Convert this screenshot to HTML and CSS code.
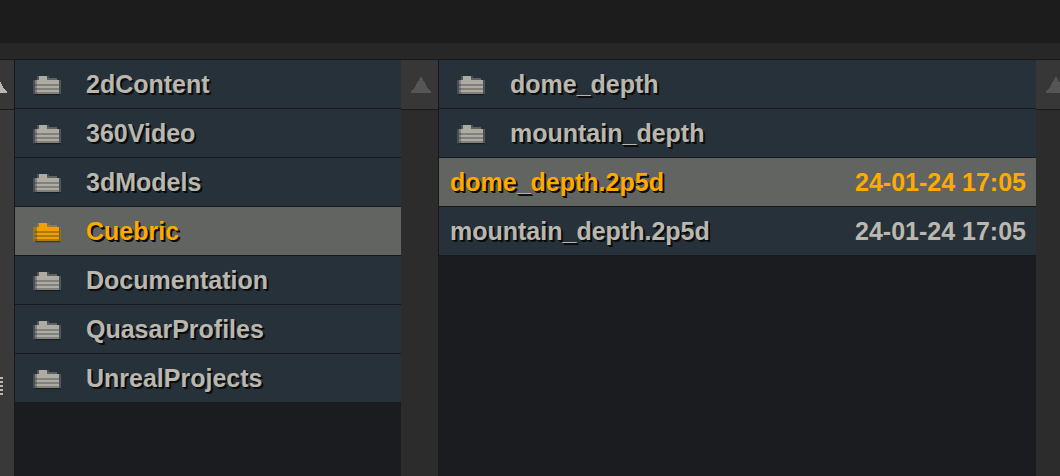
FILE: index.html
```
<!DOCTYPE html>
<html lang="en">
<head>
<meta charset="utf-8">
<title>File browser</title>
<link rel="stylesheet" href="styles.css">
</head>
<body>
<svg class="defs" width="0" height="0">
  <symbol id="folder" viewBox="0 0 30 24" shape-rendering="crispEdges">
    <path d="M2 8H28V24H2Z" fill="#0b0f12" opacity=".15"/>
    <path d="M3 8H27V23H3Z" fill="#0b0f12" opacity=".4"/>
    <path d="M0 8H2V22H0Z" fill="currentColor" opacity=".25"/>
    <path d="M26 8H28V22H26Z" fill="currentColor" opacity=".35"/>
    <path d="M4 4H6V8H4Z" fill="currentColor" opacity=".3"/>
    <path d="M6 4H14V8H6Z" fill="currentColor"/>
    <path d="M14 4H16V6H14Z" fill="currentColor" opacity=".25"/>
    <path d="M14 6H24V8H14Z" fill="currentColor" opacity=".4"/>
    <path d="M2 8H26V22H2Z" fill="currentColor"/>
    <path d="M2 12H26V14H2ZM2 16H26V18H2ZM2 20H26V22H2Z" fill="#20242a" opacity=".32"/>
    <path d="M2 8H4V22H2Z" fill="#20242a" opacity=".3"/>
  </symbol>
  <symbol id="up" viewBox="0 0 20 16" shape-rendering="crispEdges">
    <path d="M9 0H11V2H12V4H13V5H14V7H15V9H16V11H17V12H18V13H19V14H20V16H0V14H1V13H2V12H3V11H4V9H5V7H6V5H7V4H8V2H9Z" fill="currentColor"/>
  </symbol>
</svg>
<div class="topbar"></div>
<div class="toolbar"></div>
<main class="browser">
  <div class="scroll scroll-left">
    <div class="scroll-button bright"><svg class="arrow"><use href="#up"/></svg></div>
    <div class="track"><div class="grip"></div></div>
  </div>
  <section class="list folders">
    <div class="row"><svg class="icon"><use href="#folder"/></svg><span class="name">2dContent</span></div>
    <div class="row"><svg class="icon"><use href="#folder"/></svg><span class="name">360Video</span></div>
    <div class="row"><svg class="icon"><use href="#folder"/></svg><span class="name">3dModels</span></div>
    <div class="row selected"><svg class="icon"><use href="#folder"/></svg><span class="name">Cuebric</span></div>
    <div class="row"><svg class="icon"><use href="#folder"/></svg><span class="name">Documentation</span></div>
    <div class="row"><svg class="icon"><use href="#folder"/></svg><span class="name">QuasarProfiles</span></div>
    <div class="row"><svg class="icon"><use href="#folder"/></svg><span class="name">UnrealProjects</span></div>
  </section>
  <div class="scroll scroll-middle">
    <div class="scroll-button"><svg class="arrow"><use href="#up"/></svg></div>
    <div class="track"></div>
  </div>
  <section class="list files">
    <div class="row"><svg class="icon"><use href="#folder"/></svg><span class="name">dome_depth</span></div>
    <div class="row"><svg class="icon"><use href="#folder"/></svg><span class="name">mountain_depth</span></div>
    <div class="row file selected"><span class="name">dome_depth.2p5d</span><span class="date">24-01-24 17:05</span></div>
    <div class="row file"><span class="name">mountain_depth.2p5d</span><span class="date">24-01-24 17:05</span></div>
  </section>
  <div class="scroll scroll-right">
    <div class="scroll-button"><svg class="arrow"><use href="#up"/></svg></div>
    <div class="track"></div>
  </div>
</main>
</body>
</html>
```
FILE: styles.css
```
* { box-sizing: border-box; }
body {
  margin: 0;
  height: 476px;
  display: flex;
  flex-direction: column;
  overflow: hidden;
  background: #1b1c20;
  color: #bab8ae;
  font: bold 25px/48px "Liberation Sans", Arial, sans-serif;
}
.defs { display: none; }
.topbar { height: 43px; background: #1c1c1c; }
.toolbar { height: 17px; background: #272727; border-bottom: 1px solid #191919; }
.browser { flex: 1; display: flex; }
.list { background: #1b1c20; }
.folders { width: 386px; }
.files { width: 597px; }
.row {
  height: 49px;
  display: flex;
  align-items: center;
  padding-left: 18px;
  padding-right: 10px;
  background: #27313a;
  border-bottom: 1px solid #17191d;
  white-space: nowrap;
}
.row.selected { background: #626462; color: #ffaa00; }
.row.file { padding-left: 11px; justify-content: space-between; }
.icon { width: 30px; height: 24px; margin-right: 23px; color: #aeaca2; flex: none; }
.selected .icon { color: #f0a000; }
.name { height: 48px; text-shadow: 1px 1px 0 #0b0c0d, 2px 2px 0 #0b0c0d; }
.date { height: 48px; }
.scroll { display: flex; flex-direction: column; overflow: hidden; }
.scroll-left { width: 15px; border-right: 1px solid #17181a; }
.scroll-middle { width: 38px; border-right: 1px solid #17181a; }
.scroll-right { width: 24px; }
.scroll-button {
  height: 50px;
  padding: 17px 0 0 10px;
  background: #373737;
  border-bottom: 1px solid #191919;
  color: #555;
}
.scroll-button.bright { padding-left: 0; color: #bab8ae; }
.arrow { display: block; width: 20px; height: 16px; }
.bright .arrow { margin-left: -13px; }
.track { flex: 1; background: #2b2c2b; }
.scroll-left .track { background: #393939; padding-top: 267px; }
.grip {
  width: 3px;
  height: 18px;
  background: repeating-linear-gradient(#bab8ae 0 2px, #393939 2px 4px);
}
```
